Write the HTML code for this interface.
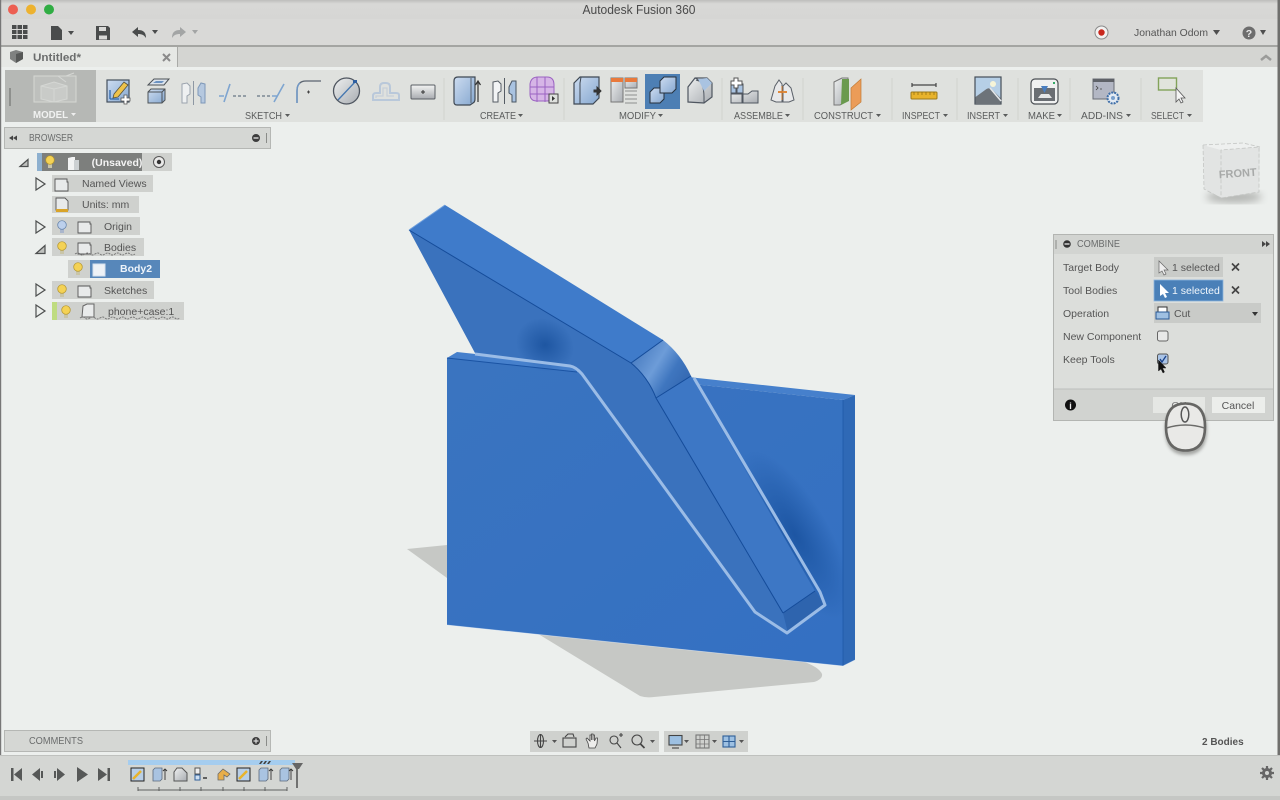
<!DOCTYPE html>
<html><head><meta charset="utf-8"><title>Autodesk Fusion 360</title>
<style>
html,body{margin:0;padding:0;width:1280px;height:800px;overflow:hidden;background:#ecefed}
svg{display:block;position:absolute;left:0;top:0;filter:blur(.35px)}
text{font-family:"Liberation Sans",sans-serif;fill:#555}
.l{font-size:10.5px;fill:#5a5c5c}
.t{font-size:10.5px;fill:#555}
.d{fill:#5a5c5c}
</style></head><body>
<svg width="1280" height="800" viewBox="0 0 1280 800" xmlns="http://www.w3.org/2000/svg">
<defs>
<linearGradient id="box" x1="0" y1="0" x2="1" y2="1"><stop offset="0" stop-color="#cddcf0"/><stop offset="1" stop-color="#86a8d0"/></linearGradient>
<linearGradient id="gbox" x1="0" y1="0" x2="1" y2="1"><stop offset="0" stop-color="#eef0f0"/><stop offset="1" stop-color="#a9adb2"/></linearGradient>
<linearGradient id="title" x1="0" y1="0" x2="0" y2="1"><stop offset="0" stop-color="#bdbdbb"/><stop offset=".2" stop-color="#d8d8d6"/><stop offset="1" stop-color="#d6d6d4"/></linearGradient>
<linearGradient id="fil" x1="0" y1="0" x2="1" y2="0.6"><stop offset="0" stop-color="#3b70b8"/><stop offset=".5" stop-color="#6d9cd8"/><stop offset=".75" stop-color="#3f76bf"/><stop offset="1" stop-color="#3569b2"/></linearGradient>
<radialGradient id="sh1" cx=".5" cy=".5" r=".5"><stop offset="0" stop-color="#124a96" stop-opacity=".7"/><stop offset="1" stop-color="#124a96" stop-opacity="0"/></radialGradient>
<linearGradient id="plate" x1="0" y1="0" x2="1" y2="1"><stop offset="0" stop-color="#3a74c0"/><stop offset="1" stop-color="#3470c2"/></linearGradient>
<linearGradient id="btn" x1="0" y1="0" x2="0" y2="1"><stop offset="0" stop-color="#f3f4f3"/><stop offset="1" stop-color="#a8abb0"/></linearGradient>
<filter id="b2"><feGaussianBlur stdDeviation="1.5"/></filter>
<filter id="b4"><feGaussianBlur stdDeviation="4"/></filter>
<clipPath id="pc"><path d="M447 358l396 42v266l-396-41z"/></clipPath>
</defs>

<!-- chrome -->
<rect width="1280" height="800" fill="#ecefed"/>
<rect x="0" y="0" width="1280" height="19" fill="url(#title)"/>
<rect x="0" y="19" width="1280" height="26" fill="#d9d9d7"/>
<rect x="0" y="45" width="1280" height="2.5" fill="#a4a5a2"/>
<rect x="0" y="47" width="1280" height="20" fill="#d4d5d2"/>
<rect x="0" y="47" width="177" height="20" fill="#e6e8e5"/>
<rect x="177" y="47" width="1" height="20" fill="#a9aaa7"/>
<rect x="0" y="0" width="1.2" height="800" fill="#777"/>
<rect x="1277.500" y="0" width="2.500" height="800" fill="#6f6f6d"/>
<circle cx="13" cy="9.5" r="5" fill="#ed5f52"/><circle cx="31" cy="9.5" r="5" fill="#edb22f"/><circle cx="49" cy="9.5" r="5" fill="#30ad43"/>
<text x="639" y="14" text-anchor="middle" textLength="113" lengthAdjust="spacingAndGlyphs" style="font-size:12.5px;fill:#4a4a4a">Autodesk Fusion 360</text>

<!-- top toolbar icons -->
<g fill="#4a4c4c">
<rect x="12" y="25" width="4.5" height="4"/><rect x="17.5" y="25" width="4.5" height="4"/><rect x="23" y="25" width="4.5" height="4"/>
<rect x="12" y="30" width="4.5" height="4"/><rect x="17.5" y="30" width="4.5" height="4"/><rect x="23" y="30" width="4.5" height="4"/>
<rect x="12" y="35" width="4.5" height="4"/><rect x="17.5" y="35" width="4.5" height="4"/><rect x="23" y="35" width="4.5" height="4"/>
<path d="M51 26h7l4 4v10H51z"/><path d="M68 31h6l-3 4z"/>
<path d="M96 26h12l2 2v12H96z"/>
<path d="M132 32l6-5v3c6 0 8 3 8 8-2-3-4-4-8-4v3z"/><path d="M152 30h6l-3 4z"/>
</g>
<rect x="99" y="27" width="7" height="4" fill="#d9d9d7"/><rect x="99" y="35.500" width="8" height="4" fill="#d9d9d7"/>
<path d="M186 32l-6-5v3c-6 0-8 3-8 8 2-3 4-4 8-4v3z" fill="#a3a5a5"/><path d="M192 30h6l-3 4z" fill="#a3a5a5"/>
<circle cx="1101.500" cy="32.500" r="6.500" fill="#f2f2f1" stroke="#8a8a8a"/><circle cx="1101.500" cy="32.500" r="3.200" fill="#c9281e"/>
<text x="1134" y="36" textLength="74" lengthAdjust="spacingAndGlyphs" style="font-size:10.500px;fill:#555">Jonathan Odom</text><path d="M1213 30h7l-3.500 5z" fill="#4f4f4f"/>
<circle cx="1249" cy="33" r="6.500" fill="#6d6d6d"/><text x="1249" y="37" text-anchor="middle" style="font-size:10.500px;font-weight:bold;fill:#e8e8e8">?</text><path d="M1260 30h6l-3 5z" fill="#4f4f4f"/>

<!-- tab -->
<path d="M10 52l6-2 7 2v7l-7 4-6-4z" fill="#7f8180"/><path d="M16 54l7-2v7l-7 4z" fill="#565857"/>
<text x="33" y="61" textLength="48" lengthAdjust="spacingAndGlyphs" style="font-size:11px;font-weight:bold;fill:#6b6d6d">Untitled*</text>
<path d="M163 54l7 7M170 54l-7 7" stroke="#8a8a8a" stroke-width="2"/>
<path d="M1261 60l5-4 5 4" stroke="#9a9b99" stroke-width="2.500" fill="none"/>

<!-- ribbon -->
<rect x="5" y="70" width="1198" height="52" fill="#dfe1de"/>
<rect x="5" y="70" width="91" height="52" fill="#b6b8b5"/>
<path d="M10 88v18" stroke="#8e908d" stroke-width="2"/>
<g fill="none" stroke="#d5d7d4" stroke-width="1"><path d="M34 76h42v26H34z" fill="#bec0bd"/><path d="M41 86l13-4 13 4v13l-13 3-13-3z" fill="#c9cbc8"/><path d="M41 86l13 3 13-3M54 89v13"/><path d="M58 76l8 6M66 76l8-3"/></g>
<text x="33" y="118" textLength="35" lengthAdjust="spacingAndGlyphs" style="font-size:10.500px;font-weight:bold;fill:#f1f2f1">MODEL</text><path d="M71 113h5l-2.500 3z" fill="#eee"/>
<g stroke="#d0d2cf" stroke-width="1"><path d="M444 78v42M564 78v42M722 78v42M803 78v42M892 78v42M957 78v42M1018 78v42M1070 78v42M1141 78v42"/></g>

<!-- sketch icons -->
<rect x="107" y="80" width="22" height="22" fill="url(#box)" stroke="#45505e" stroke-width="1.200"/>
<path d="M110 99h9M110 99v-9" stroke="#2f68ad" stroke-width="1.300" fill="none"/>
<path d="M114 94l10-12 4 3-10 12-5 1z" fill="#eec24a" stroke="#54503c" stroke-width=".8"/>
<path d="M124 95h3v3h3v3h-3v3h-3v-3h-3v-3h3z" fill="#fff" stroke="#555" stroke-width=".8"/>
<path d="M148 85l6-6h15l-5 6z" fill="#dbe3ec" stroke="#4d5257"/><path d="M153 83l3-2h8l-2 2z" fill="#6c93c2"/>
<path d="M148 92l3-3h14v11l-3 3h-14z" fill="url(#box)" stroke="#4d5257"/><path d="M148 92h14v11M162 92l3-3" stroke="#4d5257" fill="none"/>
<path d="M182 84l5-1 3 3v8l-3 2v7h-5z" fill="#eef0f1" stroke="#9ba3ad"/><path d="M193.500 81v24" stroke="#8d97a3"/><path d="M205 84l-4-1-3 5v7l3 2v6h4z" fill="#b5c8df" stroke="#7e98b8"/>
<path d="M219 96h5M230 84l-6 18" stroke="#7ea5d0" stroke-width="1.600" fill="none"/><path d="M233 96h3M238 96h3M243 96h3" stroke="#7c8894" stroke-width="1.500"/>
<path d="M257 96h3M262 96h3M267 96h3" stroke="#7c8894" stroke-width="1.500"/><path d="M274 102l10-18M272 96h5" stroke="#7ea5d0" stroke-width="1.600" fill="none"/>
<path d="M297 103V91q0-10 9-10h15" stroke="#5b6470" stroke-width="1.300" fill="none"/><path d="M297 103V91q0-6 3-8" stroke="#6f97c6" stroke-width="1.500" fill="none"/><path d="M307 92h3M308.500 90.500v3" stroke="#444"/>
<circle cx="346.500" cy="91" r="13" fill="url(#gbox)" stroke="#4f5660" stroke-width="1.300"/><path d="M338 100l17-18" stroke="#4577b0" stroke-width="1.300"/><rect x="353" y="80" width="4" height="3" fill="#2d5ea0"/>
<path d="M373 100v-4q0-3 3-3h4v-6q0-4 4-4h2q4 0 4 4v6h6q3 0 3 2v5z" fill="none" stroke="#b9c8da" stroke-width="2"/>
<path d="M376 98v-2h7v-8h4v8h7" fill="none" stroke="#c6cfd9" stroke-width="1.200"/>
<rect x="411" y="85" width="24" height="14" rx="1" fill="url(#btn)" stroke="#5a5e64"/><path d="M421 92h4M423 90v4" stroke="#333"/>

<!-- create -->
<path d="M454 81q0-4 4-4h17v22q0 3-2 4l-3 2h-13q-3 0-3-3z" fill="url(#box)" stroke="#3f4853" stroke-width="1.200"/><path d="M471 78v25" fill="none" stroke="#5a6470"/>
<path d="M478 102V81M475.500 85l2.500-4 2.500 4" stroke="#333" fill="none" stroke-width="1.200"/>
<path d="M493 82l5-1 3 3v7l-3 2v9h-5z" fill="#f2f4f5" stroke="#555c64"/><path d="M504.500 78v26" stroke="#555c64"/><path d="M516 81l-4 0-3 6v6l3 2v7h4z" fill="#a9c3e1" stroke="#4a5663"/>
<path d="M530 84q1-7 8-7h9q7 0 7 8v10q0 6-7 6h-10q-7 0-7-7z" fill="#d6b5e6" stroke="#9b62c2"/><path d="M530 87h24M530 94h24M537 77v25M545 77v25" stroke="#9b62c2" fill="none"/>
<rect x="549" y="94" width="9" height="9" fill="#dfe1de" stroke="#444"/><path d="M552 96l3 2.500-3 2.500z" fill="#333"/>

<!-- modify -->
<path d="M574 83l6-6h19v21l-6 6h-19z" fill="url(#box)" stroke="#3f4853" stroke-width="1.200"/><path d="M580 104V83l1-6" fill="none" stroke="#3f4853"/>
<path d="M594 90h3v-3l4 4-4 4v-3h-3z" fill="#333" stroke="#333"/>
<rect x="611" y="78" width="12" height="24" fill="url(#gbox)" stroke="#777"/><rect x="611" y="78" width="12" height="4" fill="#e97a3c"/>
<rect x="625" y="78" width="12" height="10" fill="url(#gbox)" stroke="#777"/><rect x="625" y="78" width="12" height="4" fill="#e97a3c"/>
<path d="M625 91h12M625 95h12M625 99h12M625 103h12" stroke="#a8aaa8" stroke-width="1.500"/>
<rect x="645" y="74" width="35" height="35" fill="#4d7fb4"/>
<path d="M650 92l4-4h10v11l-4 4h-10z" fill="url(#box)" stroke="#26303c"/><path d="M660 81l4-4h12v12l-4 4h-12z" fill="url(#box)" stroke="#26303c"/>
<path d="M688 102V87l7-9h12l5 5v14l-8 6z" fill="url(#gbox)" stroke="#4f5660" stroke-width="1.200"/><path d="M695 78q9 3 9 19v6M696 80q8 3 16 3" fill="none" stroke="#4f5660"/><path d="M698 79l9-1 5 5-8 8z" fill="#a9c3e1"/>

<!-- assemble -->
<path d="M731 94h11v9h-11zM743 94h5l4-3h6v12h-15z" fill="url(#gbox)" stroke="#4f5660"/>
<path d="M731 84h5v9h-5zM737 84h6v9h-6z" fill="#a9c3e1" stroke="#4f5660"/>
<path d="M734 78h4v3h4v4h-4v3h-4v-3h-3v-4h3z" fill="#fff" stroke="#555"/>
<path d="M771 100l4-14 4-6 3 4v18l-6 0z" fill="#e8e9ea" stroke="#5a6068"/><path d="M794 100l-3-12-5-5-3 3v16l6 0z" fill="#e8e9ea" stroke="#5a6068"/><path d="M778 92h9" stroke="#e08a3c" stroke-width="2"/><path d="M782 86v14" stroke="#c9762c"/>

<!-- construct -->
<path d="M834 82l8-4h6v22l-8 5h-6z" fill="url(#gbox)" stroke="#777"/><path d="M842 79h7v22l-8 4z" fill="#6a9a4e"/>
<path d="M851 88l10-9v23l-10 8z" fill="#eb9c58" stroke="#c27b35" stroke-width=".7"/>

<!-- inspect -->
<path d="M912 87v-4M936 87v-4M912 85h24" stroke="#454545" fill="none" stroke-width="1.200"/>
<rect x="911" y="92" width="26" height="7" rx="1" fill="#e8b32b" stroke="#9b7a1b"/><path d="M914 92v3M918 92v3M922 92v3M926 92v3M930 92v3M934 92v3" stroke="#8a6a10" stroke-width=".7"/>

<!-- insert -->
<rect x="975" y="77" width="26" height="27" fill="#b6cfe6" stroke="#454e58" stroke-width="1.200"/><circle cx="993" cy="84" r="3" fill="#f6f4d8"/>
<path d="M975.500 104v-7l11-8q3-2 6 1l8 8v6z" fill="#6d7379"/><path d="M990 88l11 13" stroke="#e4e7ea" stroke-width="1.500"/>

<!-- make -->
<rect x="1031" y="79" width="27" height="25" rx="4" fill="#f0f1f1" stroke="#4b4f54" stroke-width="1.200"/>
<rect x="1034" y="88" width="21" height="13" fill="#6a6e73"/><path d="M1038 98l3-4h8l3 4z" fill="#e6e7e8"/><path d="M1041 86h7l-3.500 7z" fill="#4b7fc0"/><rect x="1053" y="82" width="2" height="2" fill="#3a6"/>

<!-- addins -->
<rect x="1093" y="79" width="21" height="20" fill="#b3b7c4" stroke="#6a6d75"/><rect x="1093" y="79" width="21" height="3" fill="#5f6268"/>
<path d="M1096 86l2 2-2 2M1100 89h2" stroke="#444" fill="none" stroke-width=".8"/>
<circle cx="1113" cy="98" r="5.500" fill="#e4ebf3" stroke="#3e6ea8" stroke-width="2" stroke-dasharray="2 1"/><circle cx="1113" cy="98" r="2" fill="#7aa0cc"/>

<!-- select -->
<rect x="1158.500" y="78" width="18" height="12" fill="#e1e4dc" stroke="#83a35a" stroke-width="1.400"/>
<path d="M1176 88v14l3-3 2 4 2-1-2-4h4z" fill="#f4f4f4" stroke="#555" stroke-width=".8"/>

<!-- ribbon labels -->
<text class="l" x="245" y="119" textLength="37" lengthAdjust="spacingAndGlyphs">SKETCH</text><path d="M285 114h5l-2.500 3z" class="d"/>
<text class="l" x="480" y="119" textLength="36" lengthAdjust="spacingAndGlyphs">CREATE</text><path d="M518 114h5l-2.500 3z" class="d"/>
<text class="l" x="619" y="119" textLength="37" lengthAdjust="spacingAndGlyphs">MODIFY</text><path d="M658 114h5l-2.500 3z" class="d"/>
<text class="l" x="734" y="119" textLength="49" lengthAdjust="spacingAndGlyphs">ASSEMBLE</text><path d="M785 114h5l-2.500 3z" class="d"/>
<text class="l" x="814" y="119" textLength="59" lengthAdjust="spacingAndGlyphs">CONSTRUCT</text><path d="M876 114h5l-2.500 3z" class="d"/>
<text class="l" x="902" y="119" textLength="38" lengthAdjust="spacingAndGlyphs">INSPECT</text><path d="M943 114h5l-2.500 3z" class="d"/>
<text class="l" x="967" y="119" textLength="33" lengthAdjust="spacingAndGlyphs">INSERT</text><path d="M1003 114h5l-2.500 3z" class="d"/>
<text class="l" x="1028" y="119" textLength="27" lengthAdjust="spacingAndGlyphs">MAKE</text><path d="M1057 114h5l-2.500 3z" class="d"/>
<text class="l" x="1081" y="119" textLength="42" lengthAdjust="spacingAndGlyphs">ADD-INS</text><path d="M1126 114h5l-2.500 3z" class="d"/>
<text class="l" x="1151" y="119" textLength="33" lengthAdjust="spacingAndGlyphs">SELECT</text><path d="M1187 114h5l-2.500 3z" class="d"/>

<!-- browser -->
<rect x="4.500" y="127.500" width="266" height="21" fill="#d5d7d4" stroke="#b5b7b4"/>
<path d="M9 138l4-2.500v5zM13 138l4-2.500v5z" fill="#444"/>
<text x="29" y="141" textLength="44" lengthAdjust="spacingAndGlyphs" style="font-size:10px;fill:#6a6c6c">BROWSER</text>
<circle cx="256" cy="138" r="4" fill="#3d3d3d"/><rect x="253.500" y="137.300" width="5" height="1.400" fill="#ddd"/>
<path d="M266.500 133v10" stroke="#8a8c89"/>

<!-- tree -->
<g fill="#cfd1ce">
<rect x="37" y="153" width="135" height="18"/><rect x="52" y="175" width="101" height="17"/><rect x="52" y="196" width="87" height="17"/>
<rect x="52" y="217" width="88" height="18"/><rect x="52" y="238" width="92" height="18"/><rect x="68" y="260" width="24" height="18"/>
<rect x="52" y="281" width="102" height="18"/><rect x="52" y="302" width="132" height="18"/></g>
<rect x="37" y="153" width="5" height="18" fill="#8db0cf"/><rect x="42" y="153" width="100" height="18" fill="#7d7f7d"/>
<rect x="90" y="260" width="70" height="18" fill="#5787ba"/><rect x="52" y="302" width="5" height="18" fill="#bfdc80"/>
<g fill="none" stroke="#4d4f4f" stroke-width="1.200">
<path d="M20 166.500l8-7v7z" fill="#bfc1be"/><path d="M36 178v12l9-6z"/><path d="M36 221v12l9-6z"/><path d="M36 253.500l9-8v8z" fill="#bfc1be"/><path d="M36 284v12l9-6z"/><path d="M36 305v12l9-6z"/>
</g>
<!-- bulbs -->
<g fill="#c9c5a8">
<rect x="48" y="163" width="4" height="5"/><rect x="60" y="249" width="4" height="5"/><rect x="76" y="270" width="4" height="5"/><rect x="60" y="292" width="4" height="5"/><rect x="64" y="313" width="4" height="5"/>
</g>
<rect x="60" y="228" width="4" height="5" fill="#aab6cc"/>
<g stroke="#b5952a" stroke-width=".7" fill="#f4d255">
<circle cx="50" cy="160" r="4.300"/><circle cx="62" cy="246" r="4.300"/><circle cx="78" cy="267" r="4.300"/><circle cx="62" cy="289" r="4.300"/><circle cx="66" cy="310" r="4.300"/>
</g>
<circle cx="62" cy="225" r="4.300" fill="#bcd0ec" stroke="#5f7fa8" stroke-width=".7"/>
<!-- folder icons -->
<g fill="#e8eaea" stroke="#555" stroke-width=".9">
<path d="M55 179h12v3h1v9H55z"/><path d="M78 222h12v2h1v9H78z"/><path d="M78 243h12v2h1v9H78z"/><path d="M78 286h12v2h1v9H78z"/>
<path d="M56 198h9l3 3v9H56z"/>
</g>
<rect x="56" y="209" width="12" height="3" fill="#d9a429"/>
<path d="M68 158l4-1h3v13h-7z" fill="#f2f3f3"/><path d="M74 160h5v10h-5z" fill="#ccd0d2"/>
<path d="M93 264h12v12H93z" fill="#eef2f6" stroke="#d4e0ee" /><path d="M83 306l4-2h7v13H82z" fill="#e9ebeb" stroke="#666"/>
<text x="117" y="166" text-anchor="middle" style="font-size:10.500px;font-weight:bold;fill:#f4f4f4">(Unsaved)</text>
<circle cx="159" cy="162" r="5.500" fill="#e9e9e8" stroke="#555"/><circle cx="159" cy="162" r="2.200" fill="#333"/>
<text class="t" x="82" y="187">Named Views</text>
<text class="t" x="82" y="208">Units: mm</text>
<text class="t" x="104" y="230">Origin</text>
<text class="t" x="104" y="251">Bodies</text>
<text x="120" y="272" style="font-size:10.500px;font-weight:bold;fill:#edf3fa">Body2</text>
<text class="t" x="104" y="294">Sketches</text>
<text class="t" x="108" y="315">phone+case:1</text>
<path d="M75 254q3-2 5 0t5 0 5 0 5 0 5 0 5 0 5 0 5 0 5 0 5 0 5 0 5 0" fill="none" stroke="#777" stroke-width="1" stroke-dasharray="2 1"/>
<path d="M80 318q3-2 5 0t5 0 5 0 5 0 5 0 5 0 5 0 5 0 5 0 5 0 5 0 5 0 5 0 5 0 5 0 5 0 5 0 5 0 5 0 5 0" fill="none" stroke="#777" stroke-width="1" stroke-dasharray="2 1"/>

<!-- shadows -->
<path d="M407 549l40-4v33z" fill="#c6c8c5"/>
<path d="M535 632l105 64q6 2 14 1l160-15q9-3 8-8-3-7-20-13z" fill="#c6c8c5"/>

<!-- plate -->
<path d="M447 358l10-6 398 43-12 5z" fill="#4680cc"/>
<path d="M843 400l12-5v265l-12 6z" fill="#2f69b6"/>
<path d="M447 358l396 42v266l-396-41z" fill="url(#plate)"/>
<path d="M843 400v266" stroke="#1f5aa8" stroke-width=".8"/>
<path d="M447 358l130 14" stroke="#1a53a3" stroke-width="1"/>
<path d="M447 625l396 41 12-6" stroke="#f8fbff" stroke-width=".7" fill="none" opacity=".5"/>
<g clip-path="url(#pc)"><ellipse cx="795" cy="535" rx="34" ry="95" fill="url(#sh1)" transform="rotate(-30 795 535)"/></g>

<!-- phone -->
<path d="M409 230l222 133q17 14 25 35l127 215 5 20-33-21L582 374q-6-6-12-8l-95-13z" fill="#3a72bd"/>
<ellipse cx="545" cy="345" rx="30" ry="26" fill="url(#sh1)" transform="rotate(30 545 345)"/>
<path d="M409 230l36-25 218 135-32 23z" fill="#3f7bca"/>
<path d="M631 363l32-23q18 14 28 36l-35 22q-8-21-25-35z" fill="url(#fil)"/>
<path d="M656 398l35-22 124 215-32 22z" fill="#3d77c5"/>
<path d="M783 613l32-22 10 14-37 28z" fill="#2e64ae"/>
<path d="M409 230l222 133q17 14 25 35l127 215M631 363l32-23M656 398l35-22M783 613l32-22" stroke="#154c9a" stroke-width="1" fill="none"/>
<path d="M409 230l36-25" stroke="#6f9fdc" stroke-width="1" fill="none"/>
<path d="M475 354l95 12q6 1 12 8l173 238 32 21 38-28-5-13L694 378" fill="none" stroke="#9bbce6" stroke-width="3" stroke-linejoin="round"/>

<!-- view cube -->
<ellipse cx="1234" cy="197" rx="28" ry="6" fill="#b3b5b2" filter="url(#b4)"/>
<path d="M1203 145l18 5 39-3-1 45-37 6-18-9z" fill="#e2e4e3"/>
<path d="M1203 145l18 5 39-3-17-4z" fill="#eef0ef"/>
<path d="M1203 145l1 44 17 9v-48l38-3v45l-38 6M1203 145l40-2 17 4" fill="none" stroke="#c4c6c4" stroke-dasharray="4 2" stroke-width=".8"/>
<text x="1238" y="177" text-anchor="middle" transform="rotate(-4 1238 177)" style="font-size:11px;font-weight:bold;fill:#a7a9a8">FRONT</text>

<!-- combine -->
<rect x="1053.500" y="234.500" width="220" height="186" fill="#dcdedb" stroke="#b3b5b2"/>
<rect x="1054" y="235" width="219" height="19" fill="#d2d4d1"/>
<rect x="1054" y="389" width="219" height="31" fill="#d1d3d0"/>
<path d="M1054 389h219" stroke="#bdbfbc"/>
<path d="M1056 240v9" stroke="#8a8c89"/><circle cx="1067" cy="244" r="3.800" fill="#333"/><rect x="1064.500" y="243.300" width="5" height="1.400" fill="#ddd"/>
<text x="1077" y="247" textLength="43" lengthAdjust="spacingAndGlyphs" style="font-size:10px;fill:#6a6c6c">COMBINE</text>
<path d="M1262 241l4 3-4 3zM1266 241l4 3-4 3z" fill="#444"/>
<text class="t" x="1063" y="271">Target Body</text><text class="t" x="1063" y="294">Tool Bodies</text><text class="t" x="1063" y="317">Operation</text><text class="t" x="1063" y="340">New Component</text><text class="t" x="1063" y="363">Keep Tools</text>
<rect x="1154" y="257" width="69" height="20" fill="#c9cbc8"/>
<path d="M1159 261v12l3-2 2 4 2-1-2-4h4z" fill="#eee" stroke="#666" stroke-width=".7"/>
<text x="1172" y="271" style="font-size:10.500px;fill:#555">1 selected</text>
<path d="M1232 263.500l7 7M1239 263.500l-7 7M1232 286.500l7 7M1239 286.500l-7 7" stroke="#444" stroke-width="1.700"/>
<rect x="1154" y="280" width="69" height="21" fill="#4a80b8" stroke="#8cb4de" stroke-width=".8"/>
<path d="M1160 284v12l3-2 2 4 2-1-2-4h4z" fill="#fff"/>
<text x="1172" y="294" style="font-size:10.500px;fill:#f2f7fc">1 selected</text>
<rect x="1154" y="303" width="107" height="20" fill="#c9cbc8"/>
<rect x="1158" y="307" width="9" height="7" fill="#fff" stroke="#333"/><rect x="1156" y="312" width="13" height="7" fill="#9fc0e2" stroke="#2a5a96"/>
<text x="1174" y="317" style="font-size:10.500px;fill:#555">Cut</text><path d="M1252 312h6l-3 4z" fill="#333"/>
<rect x="1157.500" y="331" width="10.500" height="10" rx="2" fill="#e8e9e8" stroke="#666"/>
<rect x="1157.500" y="354" width="10.500" height="10" rx="2" fill="#aac4e6" stroke="#555"/>
<path d="M1160 359l2 3 4-6" stroke="#17408a" stroke-width="1.300" fill="none"/>
<path d="M1158.500 360v11l2.500-2 2 4 1.500-1-2-4h3.500z" fill="#111" stroke="#222" stroke-width=".5"/>
<circle cx="1070.500" cy="405" r="5.500" fill="#111"/><text x="1070.500" y="409" text-anchor="middle" style="font-size:9px;font-weight:bold;fill:#eee">i</text>
<rect x="1153" y="397" width="52" height="16" fill="#e5e7e4"/>
<text x="1179" y="409" text-anchor="middle" style="font-size:10.500px;fill:#777">OK</text>
<rect x="1212" y="397" width="53" height="16" fill="#eceeeb"/>
<text x="1238" y="409" text-anchor="middle" style="font-size:10.500px;fill:#555">Cancel</text>

<!-- mouse -->
<path d="M1186 405q-21 0-21 23 0 26 21 26 21 0 21-26 0-23-21-23z" fill="#5e5e5c" opacity=".5" filter="url(#b2)" transform="translate(0 1)"/>
<path d="M1185.500 403.500q-19.500 0-19.500 23 0 24 19.500 24 19.500 0 19.500-24 0-23-19.500-23z" fill="#e9e9e7" stroke="#666664" stroke-width="2.600"/>
<path d="M1166.500 428q19-6 38 0" fill="none" stroke="#6b6b69" stroke-width="1.600"/>
<ellipse cx="1185" cy="414.500" rx="3.800" ry="7.500" fill="#e9e9e7" stroke="#555" stroke-width="1.500"/>

<!-- comments -->
<rect x="4.500" y="730.500" width="266" height="21" fill="#d5d7d4" stroke="#b5b7b4"/>
<text x="29" y="744" textLength="54" lengthAdjust="spacingAndGlyphs" style="font-size:10px;fill:#6a6c6c">COMMENTS</text>
<circle cx="256" cy="741" r="4" fill="#3d3d3d"/><path d="M253.500 741h5M256 738.500v5" stroke="#ddd" stroke-width="1.200"/>
<path d="M266.500 736v10" stroke="#8a8c89"/>

<!-- nav bar -->
<rect x="530" y="731" width="129" height="21" fill="#cfd1ce"/><rect x="664" y="731" width="84" height="21" fill="#cfd1ce"/>
<g stroke="#444" fill="none" stroke-width="1.100">
<ellipse cx="540.500" cy="741" rx="3" ry="6.500"/><path d="M534 741h13M540.500 734v14"/>
<rect x="563" y="738" width="13" height="9" /><path d="M565 737l3-3h5l1 3"/>
<path d="M588 743l-2-4 1-1 3 3v-6h1.500v5-6h1.500v6-5h1.500v6l1.500-3h1.500l-.5 6-2 4h-6z" fill="#ededeb" stroke-width=".8"/>
<circle cx="614" cy="740" r="4"/><path d="M617 743l4 5M619 735h4M621 733v4"/>
<circle cx="637" cy="740" r="5"/><path d="M640.500 744l4 4" stroke-width="1.700"/>
<rect x="669" y="735.500" width="13" height="9.500" fill="#9dc0e2"/><path d="M672 748h7"/>
<rect x="696" y="735" width="13" height="13" stroke="#777"/><path d="M700 735v13M704.500 735v13M696 739.500h13M696 744h13" stroke="#777" stroke-width=".8"/>
<rect x="723" y="736" width="12" height="11" fill="#9dc0e2" stroke="#2f5f98"/><path d="M729 736v11M723 741.500h12" stroke="#2f5f98"/>
</g>
<g fill="#555"><path d="M552 740h5l-2.500 3z"/><path d="M650 740h5l-2.500 3z"/><path d="M684 740h5l-2.500 3z"/><path d="M712 740h5l-2.500 3z"/><path d="M739 740h5l-2.500 3z"/></g>

<text x="1202" y="745" style="font-size:10px;font-weight:bold;fill:#555">2 Bodies</text>

<!-- timeline -->
<rect x="0" y="755" width="1280" height="45" fill="#d4d6d3"/>
<rect x="0" y="755" width="1280" height="1" fill="#bfc1be"/>
<rect x="0" y="796" width="1280" height="4" fill="#c5c7c4"/>
<g fill="#565857">
<path d="M11 768h2.500v13H11zM14 774.500l8-6.500v13z"/>
<path d="M32 774.500l8-6.500v13zM41 771h2v7h-2z"/>
<path d="M54 771h2v7h-2zM57 768l8 6.500-8 6.500z"/>
<path d="M77 767l11 7.500-11 7.500z"/>
<path d="M98 768l9 6.500-9 6.500zM107.500 768h2.500v13h-2.500z"/>
</g>
<rect x="128" y="760" width="167" height="5" fill="#a5cdef"/>
<path d="M259 764l2-3h2l-2 3zM263 764l2-3h2l-2 3zM267 764l2-3h2l-2 3z" fill="#444"/>
<path d="M292 763h11l-4 6h-3z" fill="#666"/><path d="M297 766v22" stroke="#666" stroke-width="1.800"/>
<path d="M138 790h149M138 787v4M159 787v4M180 787v4M201 787v4M223 787v4M244 787v4M265 787v4M287 787v4" stroke="#5f6160" stroke-width="1" fill="none"/>
<rect x="131" y="768" width="13" height="13" fill="#b9cfe6" stroke="#222"/><path d="M133 779l8-8" stroke="#e8b32b" stroke-width="2.500"/>
<rect x="237" y="768" width="13" height="13" fill="#b9cfe6" stroke="#222"/><path d="M239 779l8-8" stroke="#e8b32b" stroke-width="2.500"/>
<g fill="#a9c3e1" stroke="#5b6a7c" stroke-width=".8"><path d="M153 770l2-2h7v11l-2 2h-7z"/><path d="M259 770l2-2h7v11l-2 2h-7z"/><path d="M280 770l2-2h7v11l-2 2h-7z"/></g>
<path d="M165 780v-11M163 771l2-2 2 2M271 780v-11M269 771l2-2 2 2M291 780v-11M289 771l2-2 2 2" stroke="#333" fill="none" stroke-width=".9"/>
<path d="M174 781v-9l3-4h5l5 5v8z" fill="url(#gbox)" stroke="#555"/>
<path d="M195 768h5v6h-5z" fill="#eee" stroke="#555"/><path d="M195 775h5v5h-5z" fill="#cfe0f2" stroke="#2f5f98"/><path d="M203 778h4" stroke="#222" stroke-width="1.300"/>
<path d="M218 780v-6l5-5 7 5-3 3-3-2v5z" fill="#e8ae4a" stroke="#6b6b6b" stroke-width=".8"/>
<path d="M1260 773h14M1267 766v14M1262 768l10 10M1272 768l-10 10" stroke="#666" stroke-width="2.200"/><circle cx="1267" cy="773" r="5" fill="#666"/><circle cx="1267" cy="773" r="2" fill="#d4d6d3"/>
</svg>
</body></html>
